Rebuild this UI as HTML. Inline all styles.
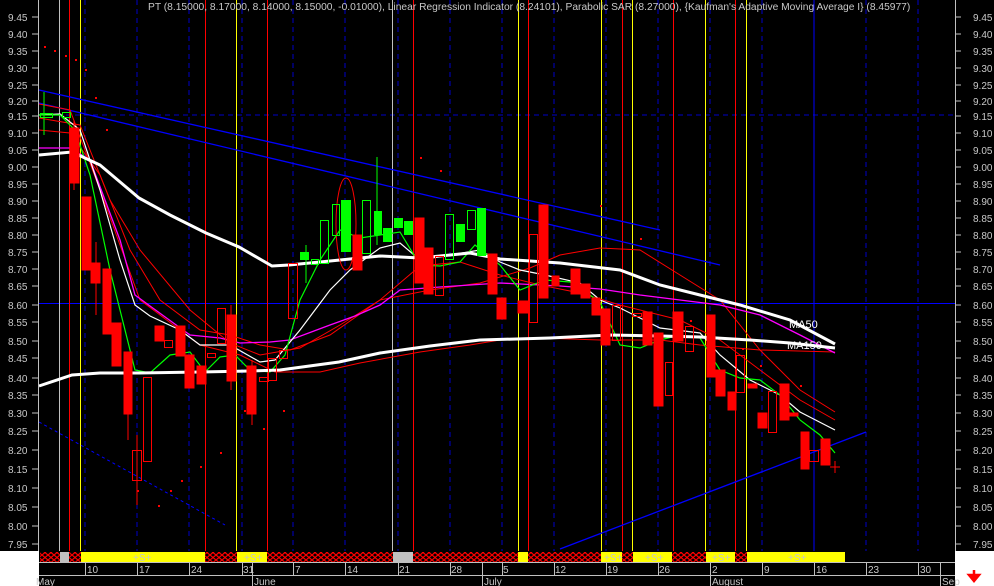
<!DOCTYPE html>
<html><head><meta charset="utf-8"><style>
html,body{margin:0;padding:0;background:#000;width:994px;height:586px;overflow:hidden}
svg{display:block}
text{font-family:"Liberation Sans",sans-serif;font-size:10px;fill:#c8c8c8}
</style></head><body>
<svg width="994" height="586" viewBox="0 0 994 586" xmlns="http://www.w3.org/2000/svg">
<defs>
<pattern id="hx" width="6" height="5" patternUnits="userSpaceOnUse">
<rect width="6" height="5" fill="#000"/>
<path d="M0 0L6 5M6 0L0 5" stroke="#ff0000" stroke-width="1.2"/>
</pattern>
</defs>
<rect width="994" height="586" fill="#000"/>
<g stroke="#0000c8" stroke-width="1" stroke-dasharray="5,4">
<line x1="85" y1="0" x2="85" y2="551"/><line x1="137" y1="0" x2="137" y2="551"/><line x1="189" y1="0" x2="189" y2="551"/><line x1="242" y1="0" x2="242" y2="551"/><line x1="293" y1="0" x2="293" y2="551"/><line x1="345" y1="0" x2="345" y2="551"/><line x1="398" y1="0" x2="398" y2="551"/><line x1="450" y1="0" x2="450" y2="551"/><line x1="502" y1="0" x2="502" y2="551"/><line x1="554" y1="0" x2="554" y2="551"/><line x1="606" y1="0" x2="606" y2="551"/><line x1="658" y1="0" x2="658" y2="551"/><line x1="710" y1="0" x2="710" y2="551"/><line x1="762" y1="0" x2="762" y2="551"/><line x1="866" y1="0" x2="866" y2="551"/><line x1="918" y1="0" x2="918" y2="551"/>
<line x1="39" y1="115" x2="955" y2="115"/>
</g>
<line x1="814" y1="0" x2="814" y2="551" stroke="#0000ff"/>
<line x1="39" y1="303.5" x2="955" y2="303.5" stroke="#0000ff"/>
<g stroke="#c0c0c0"><line x1="59.5" y1="0" x2="59.5" y2="551"/><line x1="392.5" y1="0" x2="392.5" y2="551"/></g>
<g stroke="#ff0000"><line x1="69.5" y1="0" x2="69.5" y2="551"/><line x1="205.5" y1="0" x2="205.5" y2="551"/><line x1="267.5" y1="0" x2="267.5" y2="551"/><line x1="413.5" y1="0" x2="413.5" y2="551"/><line x1="528.5" y1="0" x2="528.5" y2="551"/><line x1="622.5" y1="0" x2="622.5" y2="551"/><line x1="673.5" y1="0" x2="673.5" y2="551"/><line x1="735.5" y1="0" x2="735.5" y2="551"/></g>
<g stroke="#ffff00"><line x1="80.5" y1="0" x2="80.5" y2="551"/><line x1="236.5" y1="0" x2="236.5" y2="551"/><line x1="518.5" y1="0" x2="518.5" y2="551"/><line x1="601.5" y1="0" x2="601.5" y2="551"/><line x1="632.5" y1="0" x2="632.5" y2="551"/><line x1="705.5" y1="0" x2="705.5" y2="551"/><line x1="746.5" y1="0" x2="746.5" y2="551"/></g>
<g stroke="#0000ff" stroke-width="1.3">
<line x1="39" y1="90" x2="660" y2="230"/><line x1="39" y1="103" x2="720" y2="265"/><line x1="560" y1="549" x2="866" y2="432"/>
</g>
<line x1="39" y1="422" x2="225" y2="525" stroke="#0000ff" stroke-dasharray="3,3"/>
<g fill="none">
<polyline stroke="#ff0000" points="39,130 70,133 100,175 130,250 160,300 200,330 230,335 260,345 290,350 330,335 380,300 430,290 480,283 530,268 560,255 600,248 640,250 680,275 720,300 760,350 800,390 835,412"/>
<polyline stroke="#ff0000" points="39,118 80,125 110,200 140,250 190,310 230,343 260,355 300,348 340,325 380,300 420,266 460,262 500,275 540,285 580,293 620,305 680,320 720,340 760,370 800,400 835,420"/>
<polyline stroke="#ff0000" points="39,104 70,110 100,190 140,300 200,345 240,355 275,372 320,372 360,363 420,352 470,345 500,340 540,338 600,340 660,340 700,345 760,350 835,352"/>
<polyline stroke="#ff00ff" stroke-width="1.3" points="39,148 70,148 90,160 120,240 135,295 150,306 190,335 220,338 240,343 270,342 290,340 330,325 355,316 380,305 400,290 440,287 500,283 560,286 600,289 640,295 680,300 720,305 760,315 800,335 835,353"/>
<polyline stroke="#ffffff" stroke-width="1.2" points="39,115 60,114 80,130 100,190 120,260 135,305 150,316 180,330 200,345 230,345 260,362 275,360 300,330 330,290 350,270 380,248 400,243 420,260 450,255 480,250 500,262 520,270 545,275 580,283 600,300 620,308 660,328 700,333 720,355 750,380 780,395 800,412 835,430"/>
<polyline stroke="#00ff00" stroke-width="1.2" points="39,115 60,115 75,130 90,175 110,270 135,370 150,373 170,355 190,352 205,372 220,357 235,355 250,370 270,372 285,355 300,300 320,260 340,230 360,238 380,235 400,232 420,265 440,266 460,262 475,245 500,265 520,290 545,280 570,282 590,295 600,302 620,345 640,348 660,340 680,335 700,338 720,370 740,378 760,380 780,395 800,420 820,435 835,453"/>
<polyline stroke="#ffffff" stroke-width="3" points="39,155 72,152 100,165 139,198 170,215 206,233 239,247 272,266 289,265 320,262 380,256 420,258 470,253 500,259 560,263 620,270 660,285 700,295 740,305 790,320 835,344"/>
<polyline stroke="#ffffff" stroke-width="3" points="39,386 72,375 100,373 139,373 200,372 250,371 280,370 339,362 380,353 430,346 480,340 550,338 610,335 660,336 700,337 750,340 790,343 835,348"/>
<ellipse cx="346" cy="224" rx="10" ry="46" stroke="#ff0000"/>
</g>
<g fill="#ff0000" stroke="#ff0000">
<line x1="74" y1="120" x2="74" y2="190"/><rect x="70" y="128" width="9" height="55"/>
<rect x="82" y="197" width="9" height="73"/><line x1="96" y1="242" x2="96" y2="315"/><rect x="91" y="263" width="9" height="20"/>
<rect x="103" y="269" width="8" height="65"/><rect x="112" y="323" width="9" height="43"/>
<line x1="128" y1="352" x2="128" y2="440"/><rect x="124" y="352" width="8" height="62"/>
<rect x="155" y="326" width="9" height="15"/><rect x="176" y="326" width="9" height="30"/><rect x="185" y="355" width="9" height="33"/><rect x="197" y="366" width="9" height="18"/>
<line x1="231" y1="305" x2="231" y2="390"/><rect x="227" y="315" width="9" height="66"/><line x1="252" y1="360" x2="252" y2="425"/><rect x="247" y="366" width="9" height="48"/>
<rect x="353" y="235" width="9" height="35"/>
<rect x="415" y="218" width="9" height="65"/><rect x="424" y="248" width="9" height="46"/>
<rect x="488" y="254" width="9" height="40"/><rect x="497" y="298" width="9" height="21"/><rect x="518" y="301" width="11" height="12"/><rect x="539" y="205" width="9" height="93"/><rect x="552" y="276" width="7" height="10"/>
<rect x="571" y="269" width="9" height="25"/><rect x="581" y="284" width="9" height="14"/><rect x="592" y="298" width="8" height="17"/><rect x="601" y="309" width="9" height="36"/>
<rect x="643" y="312" width="9" height="33"/><rect x="654" y="333" width="9" height="73"/><rect x="673" y="312" width="10" height="29"/>
<rect x="707" y="315" width="8" height="62"/><rect x="716" y="370" width="9" height="26"/><rect x="728" y="392" width="8" height="18"/><rect x="748" y="384" width="9" height="4"/><rect x="758" y="413" width="9" height="15"/><rect x="780" y="384" width="9" height="36"/><rect x="789" y="413" width="9" height="3"/><rect x="801" y="432" width="8" height="37"/><rect x="821" y="439" width="9" height="26"/>
</g>
<g fill="none" stroke="#ff0000">
<rect x="132.5" y="450.5" width="9" height="30"/><line x1="137" y1="435" x2="137" y2="505"/><rect x="143.5" y="377.5" width="8" height="84"/><rect x="164.5" y="340.5" width="8" height="7"/><rect x="207.5" y="353.5" width="8" height="4"/><rect x="217.5" y="308.5" width="8" height="35"/><rect x="259.5" y="377.5" width="9" height="4"/><rect x="268.5" y="358.5" width="8" height="22"/><rect x="279.5" y="350.5" width="8" height="8"/><rect x="288.5" y="263.5" width="9" height="55"/>
<rect x="435.5" y="256.5" width="8" height="39"/><rect x="529.5" y="234.5" width="8" height="88"/>
<rect x="612.5" y="305.5" width="8" height="35"/><rect x="632.5" y="313.5" width="9" height="3"/><rect x="665.5" y="362.5" width="7" height="33"/><rect x="685.5" y="326.5" width="8" height="25"/><rect x="736.5" y="355.5" width="8" height="37"/><rect x="768.5" y="391.5" width="8" height="41"/><rect x="809.5" y="450.5" width="9" height="11"/>
<path d="M830 467h10M835 461v12"/>
</g>
<g fill="#00ff00"><rect x="300" y="252" width="9" height="8"/><rect x="341" y="200" width="10" height="52"/><rect x="374" y="211" width="8" height="24"/><rect x="383" y="228" width="9" height="14"/><rect x="394" y="218" width="9" height="10"/><rect x="404" y="221" width="9" height="14"/><rect x="456" y="224" width="9" height="18"/><rect x="477" y="208" width="9" height="48"/></g>
<g fill="none" stroke="#00ff00"><rect x="311.5" y="259.5" width="7" height="5"/><rect x="320.5" y="220.5" width="8" height="43"/><rect x="332.5" y="204.5" width="7" height="31"/><rect x="362.5" y="200.5" width="8" height="53"/><rect x="445.5" y="214.5" width="8" height="45"/><rect x="467.5" y="210.5" width="8" height="19"/><line x1="377" y1="157" x2="377" y2="245"/><line x1="306" y1="245" x2="306" y2="283"/><line x1="44" y1="92" x2="44" y2="135"/><rect x="40.5" y="113.5" width="12" height="4"/><rect x="62.5" y="112.5" width="8" height="5"/></g>
<g fill="#ff0000"><rect x="44" y="46" width="2" height="2"/><rect x="54" y="50" width="2" height="2"/><rect x="65" y="55" width="2" height="2"/><rect x="75" y="59" width="2" height="2"/><rect x="85" y="69" width="2" height="2"/><rect x="95" y="97" width="2" height="2"/><rect x="106" y="129" width="2" height="2"/><rect x="137" y="490" width="2" height="2"/><rect x="158" y="505" width="2" height="2"/><rect x="170" y="490" width="2" height="2"/><rect x="181" y="480" width="2" height="2"/><rect x="200" y="466" width="2" height="2"/><rect x="220" y="452" width="2" height="2"/><rect x="244" y="410" width="2" height="2"/><rect x="263" y="428" width="2" height="2"/><rect x="283" y="410" width="2" height="2"/><rect x="420" y="157" width="2" height="2"/><rect x="440" y="170" width="2" height="2"/><rect x="600" y="205" width="2" height="2"/><rect x="640" y="238" width="2" height="2"/><rect x="690" y="320" width="2" height="2"/><rect x="742" y="348" width="2" height="2"/><rect x="760" y="365" width="2" height="2"/><rect x="800" y="385" width="2" height="2"/></g>
<text x="789" y="328" style="fill:#fff;font-size:11px">MA50</text>
<text x="787" y="349" style="fill:#fff;font-size:11px">MA150</text>
<text x="148" y="10" style="font-size:10.25px">PT (8.15000, 8.17000, 8.14000, 8.15000, -0.01000), Linear Regression Indicator (8.24101), Parabolic SAR (8.27000), {Kaufman's Adaptive Moving Average I} (8.45977)</text>
<line x1="38.5" y1="0" x2="38.5" y2="551" stroke="#c0c0c0"/>
<line x1="955.5" y1="0" x2="955.5" y2="551" stroke="#c0c0c0"/>
<g stroke="#c0c0c0">
<path d="M32 17h6M32 34h6M32 51h6M32 68h6M32 85h6M32 101h6M32 116h6M32 133h6M32 150h6M32 167h6M32 184h6M32 201h6M32 218h6M32 235h6M32 252h6M32 269h6M32 286h6M32 305h6M32 322h6M32 341h6M32 358h6M32 378h6M32 395h6M32 413h6M32 431h6M32 450h6M32 469h6M32 488h6M32 507h6M32 526h6M32 544h6"/>
<path d="M955 17h6M955 34h6M955 51h6M955 68h6M955 85h6M955 101h6M955 116h6M955 133h6M955 150h6M955 167h6M955 184h6M955 201h6M955 218h6M955 235h6M955 252h6M955 269h6M955 286h6M955 305h6M955 322h6M955 341h6M955 358h6M955 378h6M955 395h6M955 413h6M955 431h6M955 450h6M955 469h6M955 488h6M955 507h6M955 526h6M955 544h6"/>
</g>
<g>
<text x="8" y="21">9.45</text><text x="8" y="38">9.40</text><text x="8" y="55">9.35</text><text x="8" y="72">9.30</text><text x="8" y="89">9.25</text><text x="8" y="105">9.20</text><text x="8" y="120">9.15</text><text x="8" y="137">9.10</text><text x="8" y="154">9.05</text><text x="8" y="171">9.00</text><text x="8" y="188">8.95</text><text x="8" y="205">8.90</text><text x="8" y="222">8.85</text><text x="8" y="239">8.80</text><text x="8" y="256">8.75</text><text x="8" y="273">8.70</text><text x="8" y="290">8.65</text><text x="8" y="309">8.60</text><text x="8" y="326">8.55</text><text x="8" y="345">8.50</text><text x="8" y="362">8.45</text><text x="8" y="382">8.40</text><text x="8" y="399">8.35</text><text x="8" y="417">8.30</text><text x="8" y="435">8.25</text><text x="8" y="454">8.20</text><text x="8" y="473">8.15</text><text x="8" y="492">8.10</text><text x="8" y="511">8.05</text><text x="8" y="530">8.00</text><text x="8" y="548">7.95</text>
<text x="973" y="21">9.45</text><text x="973" y="38">9.40</text><text x="973" y="55">9.35</text><text x="973" y="72">9.30</text><text x="973" y="89">9.25</text><text x="973" y="105">9.20</text><text x="973" y="120">9.15</text><text x="973" y="137">9.10</text><text x="973" y="154">9.05</text><text x="973" y="171">9.00</text><text x="973" y="188">8.95</text><text x="973" y="205">8.90</text><text x="973" y="222">8.85</text><text x="973" y="239">8.80</text><text x="973" y="256">8.75</text><text x="973" y="273">8.70</text><text x="973" y="290">8.65</text><text x="973" y="309">8.60</text><text x="973" y="326">8.55</text><text x="973" y="345">8.50</text><text x="973" y="362">8.45</text><text x="973" y="382">8.40</text><text x="973" y="399">8.35</text><text x="973" y="417">8.30</text><text x="973" y="435">8.25</text><text x="973" y="454">8.20</text><text x="973" y="473">8.15</text><text x="973" y="492">8.10</text><text x="973" y="511">8.05</text><text x="973" y="530">8.00</text><text x="973" y="548">7.95</text>
</g>
<rect x="0" y="551" width="39" height="35" fill="#fff"/>
<rect x="955" y="551" width="39" height="35" fill="#fff"/>
<path d="M974 570v8M969 575l5 6l5-6z" stroke="#ff0000" stroke-width="2.5" fill="#ff0000"/>
<rect x="40" y="552" width="805" height="10" fill="url(#hx)"/>
<g fill="#c0c0c0"><rect x="60" y="552" width="9" height="10"/><rect x="393" y="552" width="20" height="10"/></g>
<g fill="#ffff00"><rect x="81" y="552" width="124" height="10"/><rect x="237" y="552" width="30" height="10"/><rect x="518" y="552" width="10" height="10"/><rect x="601" y="552" width="21" height="10"/><rect x="633" y="552" width="39" height="10"/><rect x="706" y="552" width="29" height="10"/><rect x="747" y="552" width="98" height="10"/></g>
<g style="font-size:9px;fill:#c0c0c0"><text x="133" y="561">+S+</text><text x="244" y="561">+S+</text><text x="604" y="561">+S+</text><text x="645" y="561">+S+</text><text x="712" y="561">+S+</text><text x="788" y="561">+S+</text></g>
<line x1="39" y1="562.5" x2="955" y2="562.5" stroke="#c0c0c0"/>
<g stroke="#c0c0c0"><path d="M85.5 562v13M137.5 562v13M189.5 562v13M242.5 562v13M293.5 562v13M345.5 562v13M398.5 562v13M450.5 562v13M502.5 562v13M554.5 562v13M606.5 562v13M658.5 562v13M710.5 562v13M762.5 562v13M814.5 562v13M866.5 562v13M918.5 562v13M252.5 562v24M482.5 562v24M710.5 562v24M940.5 562v24"/></g>
<line x1="39" y1="575.5" x2="955" y2="575.5" stroke="#c0c0c0"/>
<g style="font-size:10px;fill:#c0c0c0"><text x="87" y="573">10</text><text x="139" y="573">17</text><text x="191" y="573">24</text><text x="243" y="573">31</text><text x="295" y="573">7</text><text x="347" y="573">14</text><text x="399" y="573">21</text><text x="451" y="573">28</text><text x="503" y="573">5</text><text x="555" y="573">12</text><text x="607" y="573">19</text><text x="659" y="573">26</text><text x="712" y="573">2</text><text x="764" y="573">9</text><text x="816" y="573">16</text><text x="868" y="573">23</text><text x="920" y="573">30</text>
<text x="36" y="585">May</text><text x="254" y="585">June</text><text x="484" y="585">July</text><text x="712" y="585">August</text><text x="942" y="585">Sep</text></g>
</svg>
</body></html>
